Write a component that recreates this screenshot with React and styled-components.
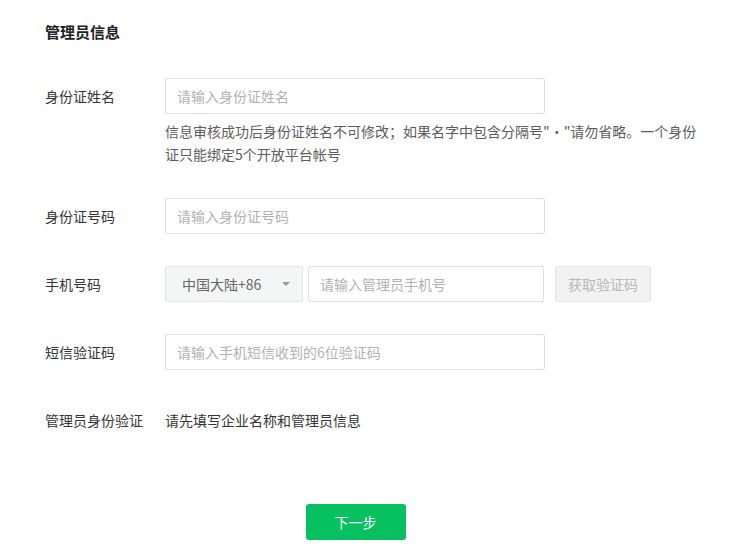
import React from "react";
import styled, { createGlobalStyle } from "styled-components";

const GlobalStyle = createGlobalStyle`
  body {
    margin: 0;
    background: #fff;
    font-family: "Noto Sans CJK SC", "Noto Sans", sans-serif;
    color: #353535;
  }
  * { box-sizing: border-box; }
`;

const Page = styled.div`
  padding: 20px 45px 14px;
  width: 745px;
`;

const Title = styled.h2`
  margin: 0 0 34px;
  font-size: 15px;
  line-height: 24px;
  font-weight: 700;
  color: #222;
`;

const Form = styled.div`
  display: flex;
  flex-direction: column;
  gap: 32px;
`;

const Row = styled.div`
  display: flex;
  align-items: flex-start;
`;

const Label = styled.div`
  width: 120px;
  flex-shrink: 0;
  font-size: 14px;
  line-height: 36px;
  color: #353535;
`;

const Field = styled.div`
  display: flex;
  flex-direction: column;
`;

const Inline = styled.div`
  display: flex;
  align-items: center;
`;

const Input = styled.input`
  width: ${(p) => p.$w || 380}px;
  height: 36px;
  padding: 0 11px;
  border: 1px solid #e0e0e0;
  border-radius: 2px;
  font-family: inherit;
  font-size: 14px;
  color: #353535;
  outline: none;
  margin-left: ${(p) => p.$ml || 0}px;

  &::placeholder {
    color: #b2b2b2;
  }
`;

const Help = styled.p`
  margin: 6px 0 0;
  width: 540px;
  font-size: 14px;
  line-height: 23px;
  color: #5c5c5c;
`;

const Select = styled.div`
  width: 138px;
  height: 36px;
  padding: 0 12px 0 16px;
  display: flex;
  align-items: center;
  justify-content: space-between;
  background: #f4f5f5;
  border: 1px solid #e5e5e5;
  border-radius: 2px;
  font-size: 14px;
  color: #666;
`;

const Caret = styled.span`
  width: 0;
  height: 0;
  border-left: 4px solid transparent;
  border-right: 4px solid transparent;
  border-top: 4px solid #9a9a9a;
`;

const CodeButton = styled.button`
  margin-left: 11px;
  width: 96px;
  height: 36px;
  background: #f2f2f2;
  border: 1px solid #e3e3e3;
  border-radius: 3px;
  font-family: inherit;
  font-size: 14px;
  color: #b8b8b8;
`;

const Text = styled.div`
  font-size: 14px;
  line-height: 36px;
  color: #353535;
`;

const Footer = styled.div`
  display: flex;
  justify-content: center;
  margin-top: 66px;
  padding-right: 34px;
`;

const Primary = styled.button`
  width: 100px;
  height: 36px;
  border: none;
  border-radius: 3px;
  background: #07c160;
  color: #fff;
  font-family: inherit;
  font-size: 14px;
`;

export default function App() {
  return (
    <>
      <GlobalStyle />
      <Page>
        <Title>管理员信息</Title>
        <Form>
          <Row>
            <Label>身份证姓名</Label>
            <Field>
              <Input placeholder="请输入身份证姓名" />
              <Help>
                信息审核成功后身份证姓名不可修改；如果名字中包含分隔号"·"请勿省略。一个身份证只能绑定5个开放平台帐号
              </Help>
            </Field>
          </Row>
          <Row>
            <Label>身份证号码</Label>
            <Input placeholder="请输入身份证号码" />
          </Row>
          <Row>
            <Label>手机号码</Label>
            <Inline>
              <Select>
                中国大陆+86
                <Caret />
              </Select>
              <Input $w={236} $ml={5} placeholder="请输入管理员手机号" />
              <CodeButton>获取验证码</CodeButton>
            </Inline>
          </Row>
          <Row>
            <Label>短信验证码</Label>
            <Input placeholder="请输入手机短信收到的6位验证码" />
          </Row>
          <Row>
            <Label>管理员身份验证</Label>
            <Text>请先填写企业名称和管理员信息</Text>
          </Row>
        </Form>
        <Footer>
          <Primary>下一步</Primary>
        </Footer>
      </Page>
    </>
  );
}
